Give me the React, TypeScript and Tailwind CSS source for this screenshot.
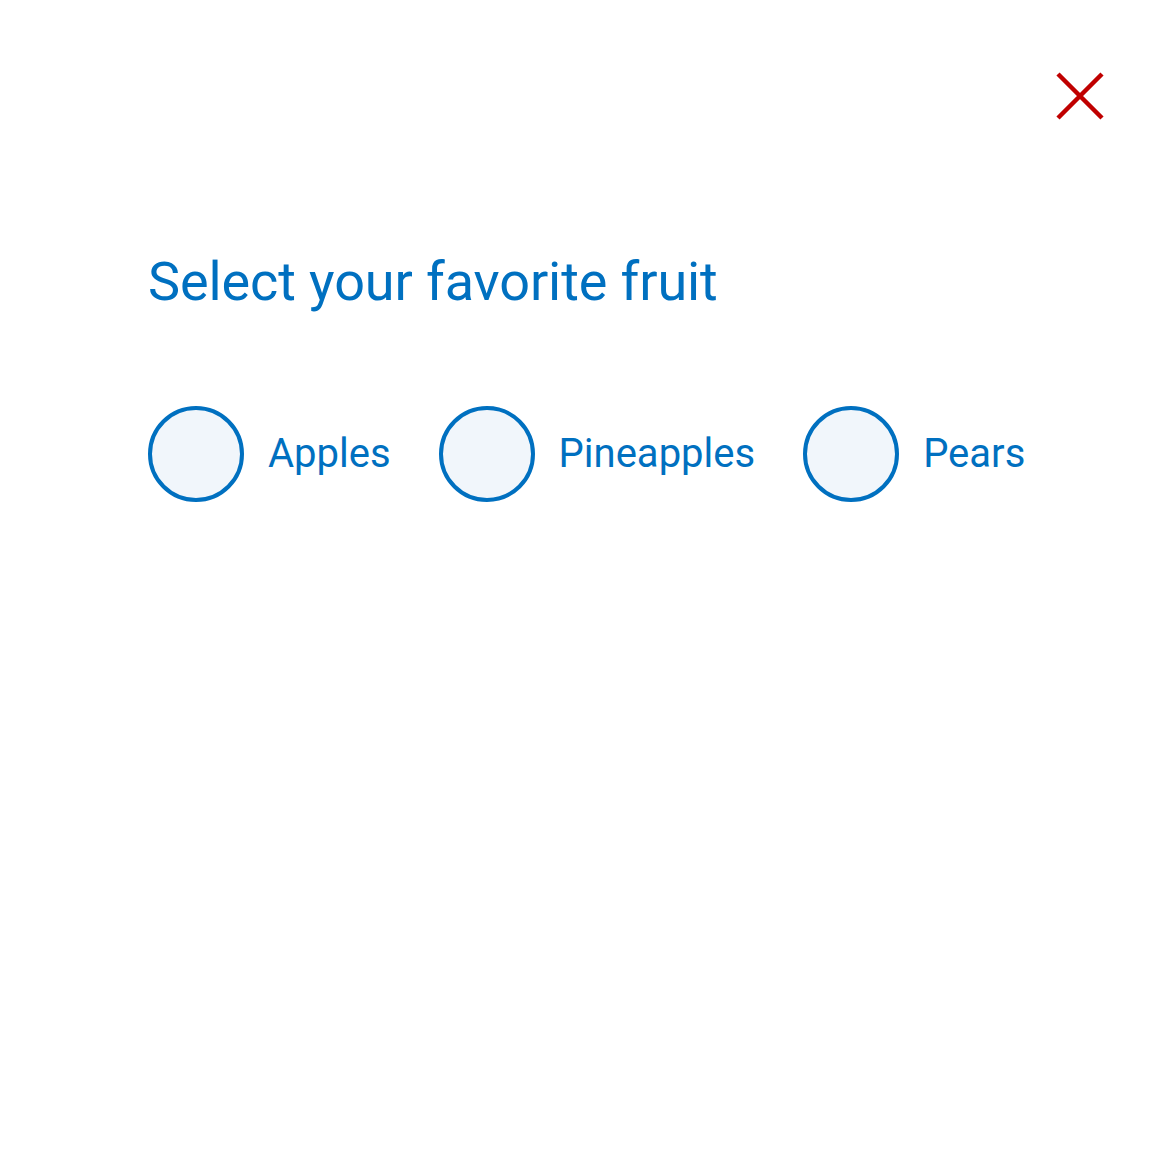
import React from 'react';

const fruits = ['Apples', 'Pineapples', 'Pears'];

export default function App() {
  return (
    <div className="relative w-[1176px] h-[1176px] bg-white" style={{ fontFamily: 'Roboto, "Noto Sans", sans-serif' }}>
      <button className="absolute right-[72px] top-[72px] w-[48px] h-[48px] flex items-center justify-center">
        <svg width="48" height="48" viewBox="0 0 48 48" fill="none">
          <path d="M2 2L46 46M46 2L2 46" stroke="#c00000" strokeWidth="4.5" />
        </svg>
      </button>
      <div className="pt-[250px] pl-[148px]">
        <h1 className="text-[54px] leading-[64px] text-[#0070c0] font-normal tracking-[-0.1px]">Select your favorite fruit</h1>
        <div className="mt-[92px] flex items-center gap-[48px]">
          {fruits.map((f) => (
            <label key={f} className="flex items-center gap-[24px]">
              <span className="w-[96px] h-[96px] rounded-full border-[4px] border-[#0070c0] bg-[#f1f6fb]" />
              <span className="text-[40px] text-[#0070c0]">{f}</span>
            </label>
          ))}
        </div>
      </div>
    </div>
  );
}
